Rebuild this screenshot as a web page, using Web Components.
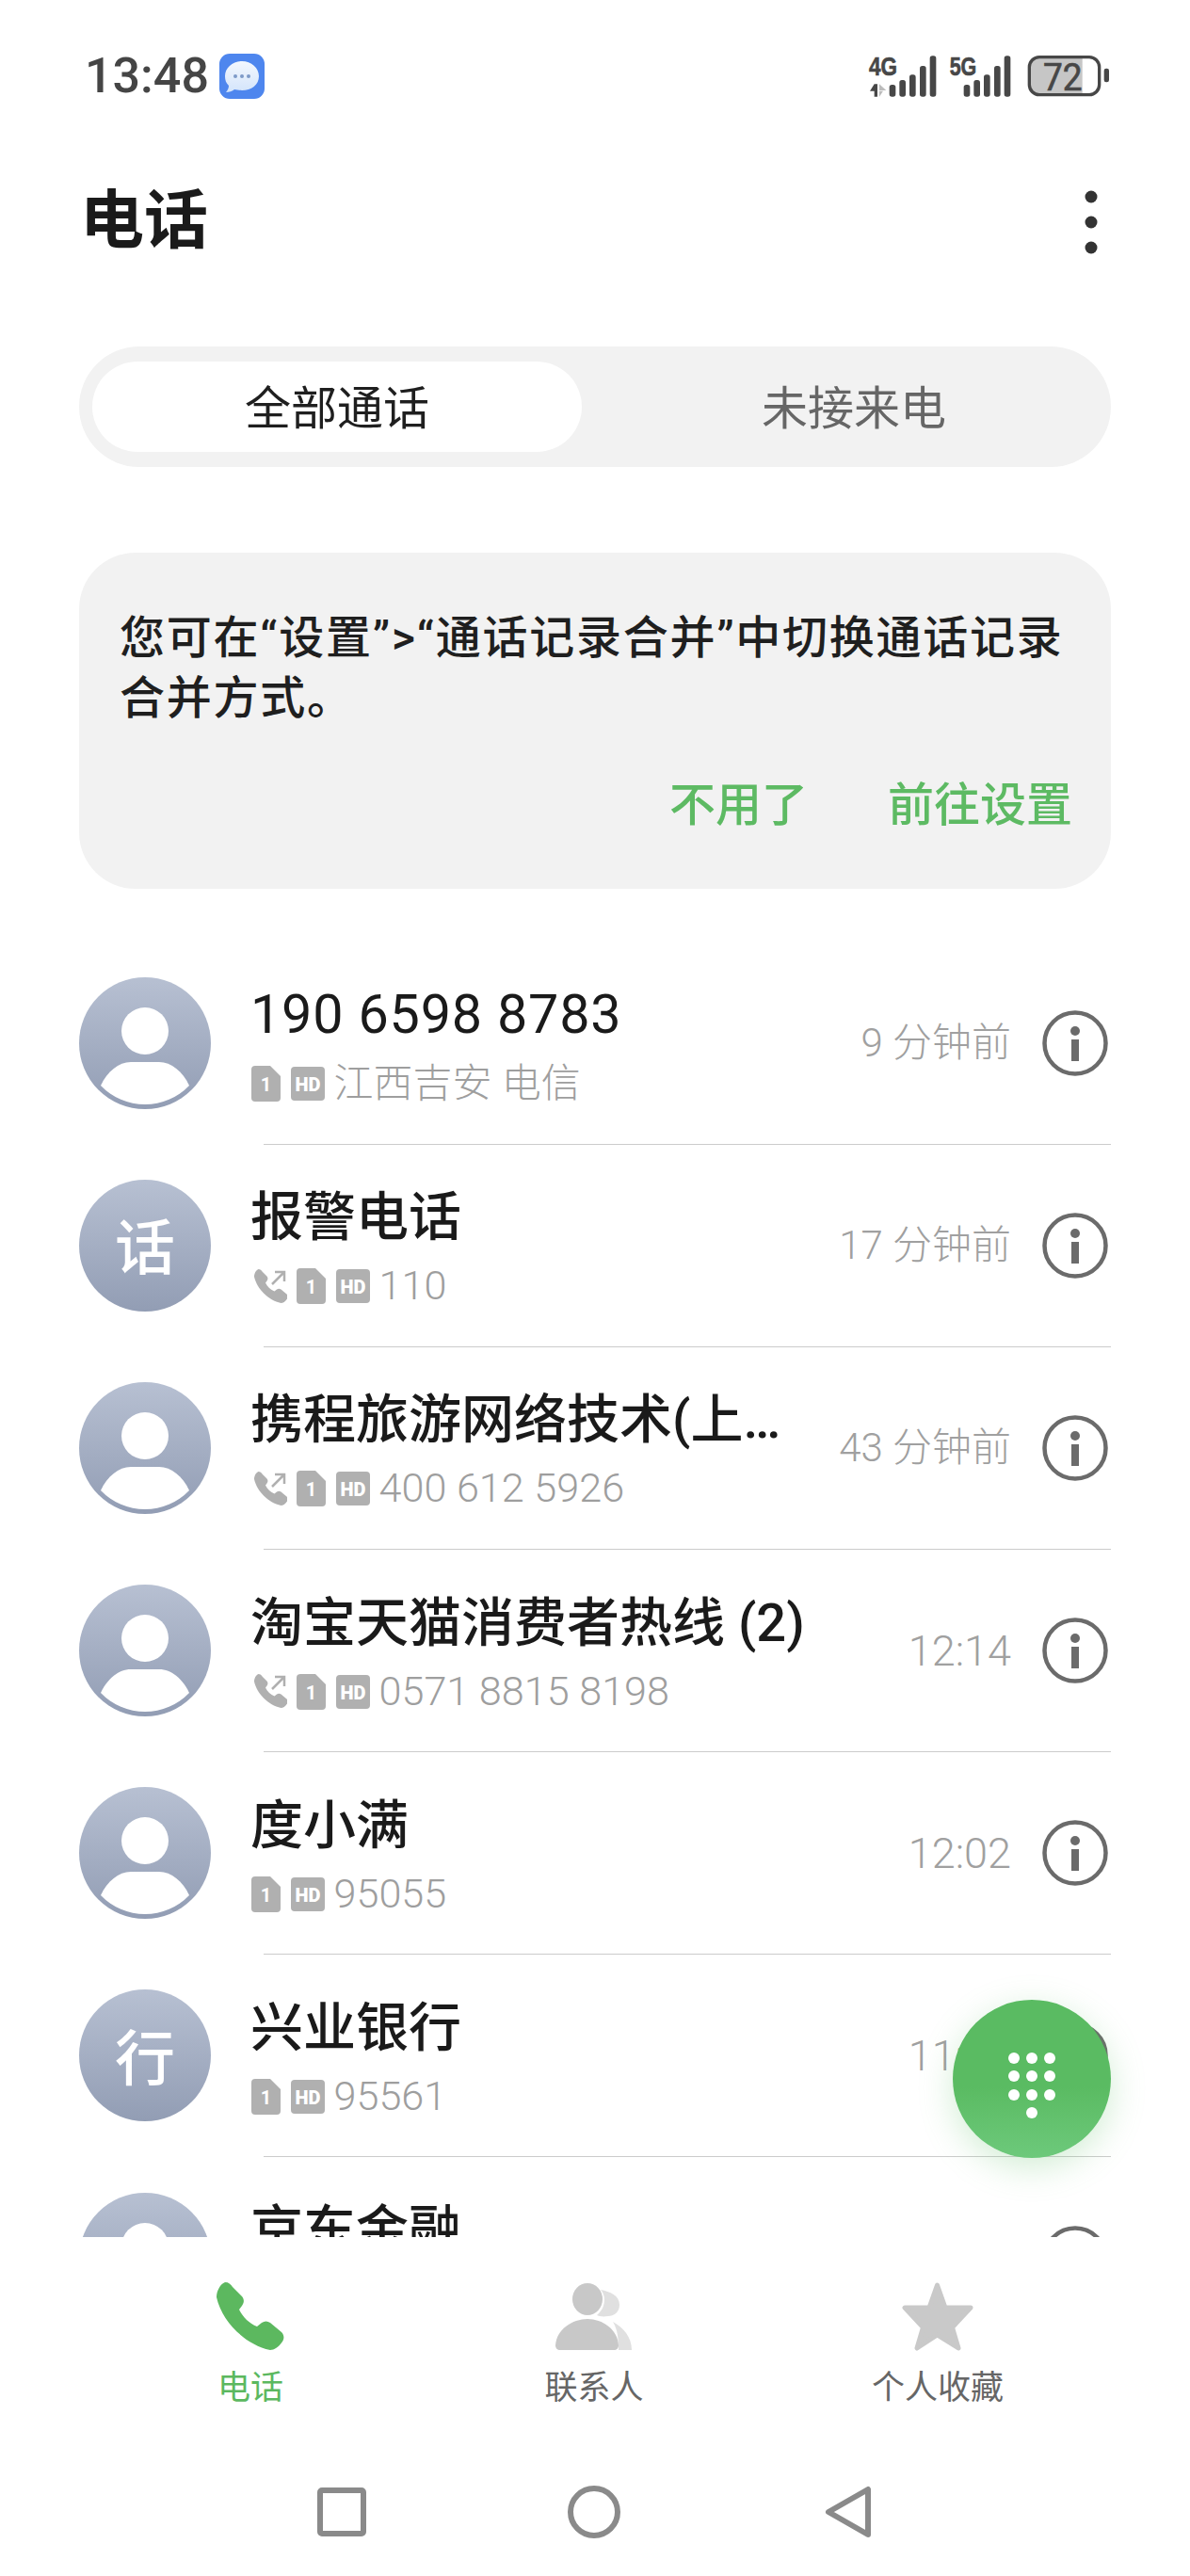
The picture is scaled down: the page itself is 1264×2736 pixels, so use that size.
<!DOCTYPE html>
<html lang="zh-CN">
<head>
<meta charset="utf-8">
<title>电话</title>
<style>
  html,body{margin:0;padding:0;background:#fff}
  body{font-family:Roboto,"Noto Sans CJK SC",sans-serif;width:1264px;height:2736px;overflow:hidden}
</style>
</head>
<body>
<phone-app>
  <status-bar></status-bar>
  <top-header>电话</top-header>
  <segment-tabs></segment-tabs>
  <notice-card>您可在“设置”&gt;“通话记录合并”中切换通话记录合并方式。</notice-card>
  <call-list>
    <call-row time="9 分钟前" numeric><span slot="name">190 6598 8783</span><span slot="sub">江西吉安 电信</span></call-row>
    <call-row time="17 分钟前" letter="话" out><span slot="name">报警电话</span><span slot="sub">110</span></call-row>
    <call-row time="43 分钟前" out><span slot="name">携程旅游网络技术(上…</span><span slot="sub">400 612 5926</span></call-row>
    <call-row time="12:14" out clock><span slot="name">淘宝天猫消费者热线 (2)</span><span slot="sub">0571 8815 8198</span></call-row>
    <call-row time="12:02" clock><span slot="name">度小满</span><span slot="sub">95055</span></call-row>
    <call-row time="11:36" letter="行" clock><span slot="name">兴业银行</span><span slot="sub">95561</span></call-row>
    <call-row time="11:20" clock><span slot="name">京东金融</span><span slot="sub">95118</span></call-row>
  </call-list>
  <tab-bar></tab-bar>
  <nav-bar></nav-bar>
  <dial-fab></dial-fab>
</phone-app>
<script>
const FONT = 'Roboto,"Noto Sans CJK SC",sans-serif';
const PHONE = 'M9 0C13 0 15 2 17 5L27 15C30 19 29 22 27 25L24 29C28 37 35 44 43 47L48 43C51 41 54 41 57 43L69 53C72 56 72 60 70 63C66 69 61 72 57 72C30 66 6 42 0 16C0 9 4 2 9 0Z';
function def(name, html, init){
  customElements.define(name, class extends HTMLElement{
    constructor(){super();this.attachShadow({mode:'open'});}
    connectedCallback(){
      this.shadowRoot.innerHTML = typeof html==='function'?html(this):html;
      if(init)init(this);
    }
  });
}
def('phone-app',`<style>
  :host{display:flex;flex-direction:column;position:relative;width:1264px;height:2736px;overflow:hidden;background:#fff;font-family:${FONT};}
</style><slot></slot>`);

def('status-bar',`<style>
  :host{display:flex;align-items:flex-start;height:130px;box-sizing:border-box;padding:0 0 0 90px;}
  .time{font:500 52px/52px Roboto,sans-serif;color:#454545;margin-top:55px;}
  .msg{margin:57px 0 0 11px;display:block}
  .gap{flex:1}
  .sig{display:block;margin:58px 84px 0 0}
  text{font-family:"Liberation Sans",Roboto,sans-serif;fill:#474747}
</style>
<span class="time">13:48</span>
<svg class="msg" width="48" height="48" viewBox="0 0 48 48">
  <defs><linearGradient id="b" x1="0" y1="0" x2="0" y2="1"><stop offset="0" stop-color="#f4f8fe"/><stop offset="1" stop-color="#d3e4fb"/></linearGradient></defs>
  <rect width="48" height="48" rx="11" fill="#4e86ee"/>
  <path d="M24 8C34 8 42 15 42 24C42 33 34 39 24 39C21 39 18 38.500 16 38C14 40 10 41 7 41C9 39 10 36 10 34C7 31 6 28 6 24C6 15 14 8 24 8Z" fill="url(#b)"/>
  <circle cx="17" cy="24" r="2" fill="#7e9ac8"/><circle cx="24" cy="24" r="2" fill="#7e9ac8"/><circle cx="31" cy="24" r="2" fill="#7e9ac8"/>
</svg>
<span class="gap"></span>
<svg class="sig" width="258" height="46" viewBox="122 84 774 138">
  <text x="125" y="150" font-size="84" font-weight="700" textLength="90" lengthAdjust="spacingAndGlyphs" stroke="#474747" stroke-width="2">4G</text>
  <text x="382" y="150" font-size="84" font-weight="700" textLength="86" lengthAdjust="spacingAndGlyphs" stroke="#474747" stroke-width="2">5G</text>
  <path d="M128 200L142 178H152V218H142V200Z" fill="#474747"/><path d="M158 178L180 198H158Z M158 218V200H170Z" fill="#bcbcbc"/>
  <g fill="#474747">
    <rect x="190" y="180" width="20" height="38" rx="8"/><rect x="222" y="165" width="20" height="53" rx="8"/><rect x="254" y="148" width="20" height="70" rx="8"/><rect x="287" y="120" width="20" height="98" rx="8"/><rect x="319" y="88" width="20" height="130" rx="8"/>
    <rect x="427" y="180" width="20" height="38" rx="8"/><rect x="459" y="165" width="20" height="53" rx="8"/><rect x="491" y="148" width="20" height="70" rx="8"/><rect x="524" y="120" width="20" height="98" rx="8"/><rect x="556" y="88" width="20" height="130" rx="8"/>
    <rect x="874" y="128" width="16" height="44" rx="7"/>
  </g>
  <path d="M805 92H668A32 32 0 0 0 636 124V180A32 32 0 0 0 668 212H805Z" fill="#c6c6c6"/>
  <rect x="636" y="92" width="223" height="120" rx="32" fill="none" stroke="#474747" stroke-width="10"/>
  <text x="680" y="197" font-size="122" textLength="125" lengthAdjust="spacingAndGlyphs" stroke="#474747" stroke-width="2" style="font-family:Roboto,sans-serif">72</text>
</svg>`);

def('top-header',`<style>
  :host{display:flex;align-items:center;justify-content:space-between;height:204px;padding:0 98px 0 85px;}
  .t{font:700 68px/80px "Noto Sans CJK SC",sans-serif;color:#1a1a1a;margin-top:-6px}
  svg{display:block;margin-top:8px}
</style>
<span class="t"><slot></slot></span>
<svg width="14" height="68" viewBox="0 0 14 68" fill="#333"><circle cx="7" cy="7" r="6.500"/><circle cx="7" cy="34" r="6.500"/><circle cx="7" cy="61" r="6.500"/></svg>`);

def('segment-tabs',`<style>
  :host{display:flex;box-sizing:border-box;height:128px;margin:34px 84px 0;padding:16px 14px;background:#f2f2f2;border-radius:64px;font:400 49px/92px "Noto Sans CJK SC",sans-serif}
  .on,.off{display:block;text-align:center;height:96px}
  .on{width:520px;background:#fff;border-radius:48px;color:#1f1f1f}
  .off{flex:1;color:#666;padding-left:30px}
</style><span class="on">全部通话</span><span class="off">未接来电</span>`);

def('notice-card',`<style>
  :host{display:block;box-sizing:border-box;height:357px;margin:91px 84px 0;padding:59px 41px 0 43px;background:#f2f2f2;border-radius:60px;}
  .m{font:500 48px/64px Roboto,"Noto Sans CJK SC",sans-serif;color:#1f1f1f;letter-spacing:1.75px;width:1020px}
  .a{display:flex;justify-content:flex-end;gap:85px;margin-top:44px;font:500 49px/66px "Noto Sans CJK SC",sans-serif;color:#5dba63}
</style>
<div class="m"><slot></slot></div>
<div class="a"><span>不用了</span><span>前往设置</span></div>`);

def('call-list',`<style>
  :host{display:block;height:1375.5px;margin-top:56.5px;overflow:hidden;}
</style><slot></slot>`);

def('call-row',el=>{
  const letter=el.getAttribute('letter'), out=el.hasAttribute('out'), time=el.getAttribute('time');
  const uid='g'+Math.random().toString(36).slice(2);
  return `<style>
  :host{display:block;height:215.2px;box-sizing:border-box;padding:0 84px;}
  .row{display:flex;align-items:center;height:214px}
  .av{position:relative;flex:none;width:140px;height:140px;}
  .av svg{display:block}
  .lt{position:absolute;inset:0 0 5px 0;display:flex;align-items:center;justify-content:center;color:#fff;font:500 64px/1 "Noto Sans CJK SC",sans-serif}
  .tx{flex:1;min-width:0;margin-left:42px;padding-top:13px;}
  .nm{font:500 56px/74px Roboto,"Noto Sans CJK SC",sans-serif;color:#1a1a1a;white-space:nowrap;}
  :host([numeric]) .nm{font:400 57.5px/74px Roboto,sans-serif;letter-spacing:.8px}
  .sb{display:flex;align-items:center;height:72px;margin-left:1px;font:300 43.2px/72px Roboto,"Noto Sans CJK SC",sans-serif;color:#9e9e9e;white-space:nowrap}
  .sb span{margin-left:-1px}
  :host([numeric]) .sb{font-size:42px}
  .ic{display:block;flex:none}
  .pc{margin:0 10px 0 3px}
  .hd{margin:0 11px 0 10.500px}
  .tm{flex:none;font:300 42px/1 Roboto,"Noto Sans CJK SC",sans-serif;color:#a0a0a0;margin-right:33px;white-space:nowrap}
  :host([clock]) .tm{font-size:45px}
  .sep{height:1px;background:#cccccc;margin-left:196px}
  text{font-family:Roboto,sans-serif}
</style>
<div class="row">
  <div class="av"><svg width="140" height="140" viewBox="0 0 140 140">
    <defs><linearGradient id="${uid}" x1="0" y1="0" x2="0" y2="1"><stop offset="0" stop-color="#b7c0d2"/><stop offset="1" stop-color="#929db4"/></linearGradient></defs>
    <circle cx="70" cy="70" r="70" fill="url(#${uid})"/>
    ${letter?'':`<circle cx="70" cy="57" r="25" fill="#fff"/><path d="M23 115C30 100 42 90 55 90H85C98 90 110 100 117 115A65 65 0 0 1 23 115Z" fill="#fff"/>`}
  </svg>${letter?`<div class="lt">${letter}</div>`:''}</div>
  <div class="tx">
    <div class="nm"><slot name="name"></slot></div>
    <div class="sb">
      ${out?`<svg class="ic pc" width="35" height="37" viewBox="0 0 35 37"><path d="${PHONE}" transform="scale(.5)" fill="#b0b0b0"/><path d="M19 16L31 4M22 3H32V13" fill="none" stroke="#b0b0b0" stroke-width="2.500"/></svg>`:''}
      <svg class="ic" width="31" height="38" viewBox="0 0 31 38"><path d="M4 0H20L31 11V34A4 4 0 0 1 27 38H4A4 4 0 0 1 0 34V4A4 4 0 0 1 4 0Z" fill="#b0b0b0"/><text x="15.500" y="27" font-size="20" font-weight="700" text-anchor="middle" fill="#fff">1</text></svg>
      <svg class="ic hd" width="36" height="36" viewBox="0 0 36 36"><rect width="36" height="36" rx="4" fill="#b0b0b0"/><text x="18" y="25.500" font-size="20" font-weight="900" text-anchor="middle" textLength="27" lengthAdjust="spacingAndGlyphs" fill="#fff">HD</text></svg>
      <span><slot name="sub"></slot></span>
    </div>
  </div>
  <div class="tm">${time}</div>
  <svg class="ic" style="margin-right:3px" width="70" height="70" viewBox="0 0 70 70"><circle cx="35" cy="35" r="32.500" fill="none" stroke="#6b6b6b" stroke-width="4.500"/><circle cx="35" cy="22" r="5" fill="#6b6b6b"/><rect x="31" y="31" width="8" height="23" fill="#6b6b6b"/></svg>
</div>
<div class="sep"></div>`;
});

def('tab-bar',`<style>
  :host{display:grid;grid-template-columns:repeat(3,365px);height:232px;padding-left:83.500px;box-sizing:border-box;}
  .t{display:flex;flex-direction:column;align-items:center;padding-top:48px;font:400 35px/48px "Noto Sans CJK SC",sans-serif;color:#666}
  .t svg{display:block;height:74px;margin-bottom:11px}
  .on{color:#5cb85f}
  .lbl{display:block;height:48px;white-space:nowrap}
</style>
<div class="t on"><svg width="72" height="74" viewBox="0 0 72 74"><path d="${PHONE}" fill="#5cb85f"/></svg><span class="lbl">电话</span></div>
<div class="t"><svg width="82" height="74" viewBox="0 0 82 74">
  <path d="M48 8C58 10 68 14 68 24C68 32 62 36 56 36C50 37 46 36 44 35C50 30 52 24 52 18C52 14 50 10 48 8Z" fill="#e0e0e0"/>
  <path d="M61 42C72 48 81 58 81 72H67C67 60 66 50 61 42Z" fill="#e0e0e0"/>
  <ellipse cx="34" cy="18" rx="16" ry="17" fill="#c8c8c8"/>
  <path d="M34 39C50 39 66 50 67 67C67 70 65 72 62 72H5C2 72 0 70 0 67C1 50 18 39 34 39Z" fill="#c8c8c8"/>
</svg><span class="lbl">联系人</span></div>
<div class="t"><svg width="76" height="74" viewBox="0 0 76 74"><path d="M37.500 3L46 27H73L53.500 48L60 70L37.500 56L16 70L22.500 48L3 27H29Z" fill="#c9c9c9" stroke="#c9c9c9" stroke-width="5" stroke-linejoin="round"/></svg><span class="lbl">个人收藏</span></div>`);

def('nav-bar',`<style>
  :host{display:flex;height:128px;align-items:flex-start;box-sizing:border-box;padding:32px 0 0 337px;}
  svg{display:block;fill:none;stroke:#8a8a8a;stroke-width:6}
</style>
<svg width="52" height="52" style="margin-top:2px"><rect x="3" y="3" width="46" height="46" rx="2"/></svg>
<svg width="56" height="56" style="margin-left:214px"><circle cx="28" cy="28" r="25"/></svg>
<svg width="50" height="56" style="margin-left:217px"><path d="M46 4V52L4 28Z" stroke-linejoin="round"/></svg>`);

def('dial-fab',`<style>
  :host{position:absolute;left:1012px;top:2124px;width:168px;height:168px;border-radius:50%;background:linear-gradient(180deg,#5abb62 0%,#5abb62 55%,#6dc97b 100%);box-shadow:0 10px 36px rgba(92,190,100,.28);}
  svg{display:block}
</style>
<svg width="168" height="168" viewBox="0 0 168 168" fill="#fff">
  <circle cx="65" cy="62" r="6"/><circle cx="84" cy="62" r="6"/><circle cx="103" cy="62" r="6"/>
  <circle cx="65" cy="81" r="6"/><circle cx="84" cy="81" r="6"/><circle cx="103" cy="81" r="6"/>
  <circle cx="65" cy="101" r="6"/><circle cx="84" cy="101" r="6"/><circle cx="103" cy="101" r="6"/>
  <circle cx="84" cy="120" r="6"/>
</svg>`);
</script>
</body>
</html>
